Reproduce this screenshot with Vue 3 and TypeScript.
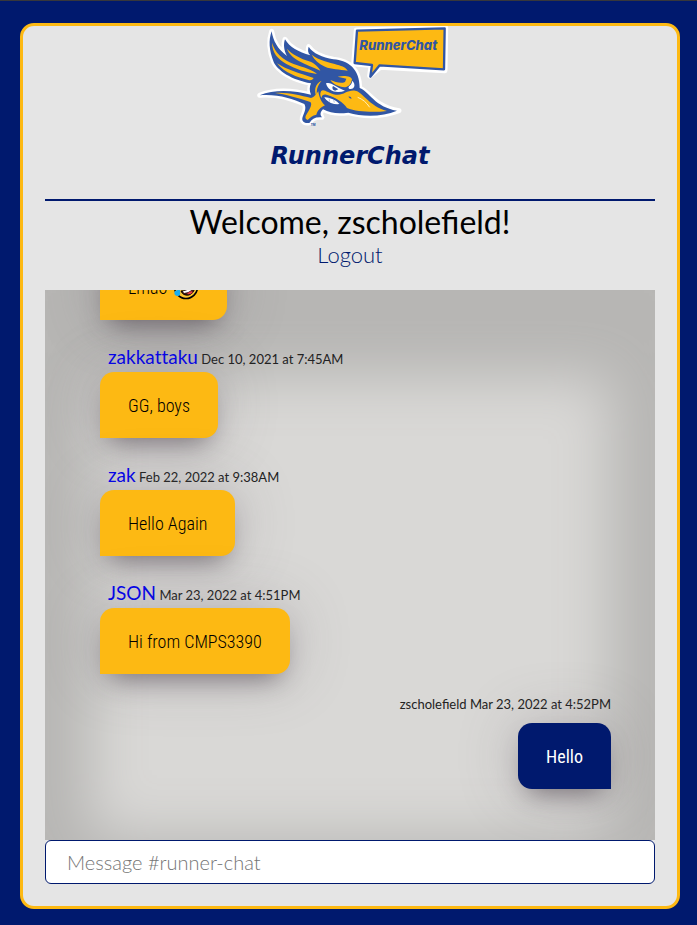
<script setup lang="ts">
import { ref } from 'vue'

interface Message {
  id: number
  author?: string
  time?: string
  text: string
  own?: boolean
  laughing?: boolean
}

const messages = ref<Message[]>([
  { id: 1, text: 'Lmao', laughing: true },
  { id: 2, author: 'zakkattaku', time: 'Dec 10, 2021 at 7:45AM', text: 'GG, boys' },
  { id: 3, author: 'zak', time: 'Feb 22, 2022 at 9:38AM', text: 'Hello Again' },
  { id: 4, author: 'JSON', time: 'Mar 23, 2022 at 4:51PM', text: 'Hi from CMPS3390' },
  { id: 5, author: 'zscholefield', time: 'Mar 23, 2022 at 4:52PM', text: 'Hello', own: true },
])
const draft = ref('')

function send() {
  const text = draft.value.trim()
  if (!text) return
  messages.value.push({ id: Date.now(), author: 'zscholefield', time: 'now', text, own: true })
  draft.value = ''
}
</script>

<template>
  <div class="page">
    <main class="card">
      <header class="brand">
        <svg class="logo" viewBox="15 18 600 306" aria-hidden="true">
          <path class="bird-edge" d="M80 34C84 62 98 88 126 108C116 90 115 72 120 58C134 82 160 96 196 106C188 98 188 90 191 80C204 100 232 112 265 118C310 122 344 146 344 204C372 214 390 262 462 272C410 292 350 290 310 278C280 282 256 280 234 268C226 276 224 284 231 292C212 290 200 296 194 308C182 312 170 306 172 294C176 280 186 266 178 252C140 236 100 222 44 226C90 206 150 212 198 224C192 212 194 200 198 190C140 180 98 152 86 126C72 90 70 62 80 34Z" />
          <path class="bird" d="M80 34C84 62 98 88 126 108C116 90 115 72 120 58C134 82 160 96 196 106C188 98 188 90 191 80C204 100 232 112 265 118C310 122 344 146 344 204C372 214 390 262 456 272C410 292 350 290 310 278C280 282 256 280 234 268C226 276 224 284 231 292C212 290 200 296 194 308C182 312 170 306 172 294C176 280 186 266 178 252C140 236 100 222 44 226C90 206 150 212 198 224C192 212 194 200 198 190C140 180 98 152 86 126C72 90 70 62 80 34Z" />
          <path class="gold" d="M81 68C90 98 112 118 146 132C176 142 204 150 216 162C184 158 152 148 124 132C98 116 82 100 81 68Z" />
          <path class="gold" d="M126 86C142 104 168 116 192 124C210 130 220 142 226 152C204 142 182 134 160 122C144 112 132 102 126 86Z" />
          <path class="gold" d="M200 104C222 122 252 126 276 134C294 138 304 144 308 152C284 148 258 148 240 140C222 132 208 120 200 104Z" />
          <path class="gold" d="M96 130C126 150 164 160 206 174C202 180 198 182 190 180C156 172 118 158 96 130Z" />
          <path class="gold" d="M90 219C126 216 164 226 198 234C208 232 216 220 220 214C222 232 230 248 240 256C224 264 218 272 214 284C202 286 196 292 188 300C182 298 180 294 182 288C192 270 204 254 196 246C160 234 120 222 90 219Z" />
          <path class="gold" d="M230 182C210 190 204 214 218 236C212 212 216 198 230 182Z" />
          <path class="gold" d="M256 180C272 186 286 192 300 186L304 176L278 170C298 166 318 168 321 178C318 192 312 200 300 202C280 200 264 192 256 180Z" />
          <path class="gold" d="M228 214C236 204 248 220 272 224C296 228 304 210 330 212C352 214 372 258 426 273C386 278 336 276 306 264C296 248 270 230 244 224C236 222 230 226 230 234C226 230 224 222 228 214Z" />
          <path class="white" d="M243 190C258 184 272 202 300 212C276 222 248 214 243 190ZM312 206C306 198 320 198 322 182C334 194 328 210 312 206Z" />
          <path class="bird" d="M264 198L280 208L270 212C263 210 260 204 264 198Z" />
          <path class="mouth" d="M234 230C248 226 278 238 288 254C268 258 242 250 234 230Z" />
          <path class="teeth" d="M252 235L254 245M266 240L268 248" />
          <path class="bird" d="M310 230Q318 228 320 236Q314 236 310 230Z" />
          <path class="shine" d="M338 232Q360 240 374 262" />
          <path class="bubble-edge" d="M334 30L602 24L600 152L406 142L374 168L378 136L326 132Z" />
          <path class="bubble" d="M336 32L599 25L597 148L404 136L376 170L381 135L329 129Z" />
          <text class="bubble-text" x="343" y="90">RunnerChat</text>
          <text class="trade" x="197" y="318">TM</text>
        </svg>
        <h1 class="title">RunnerChat</h1>
      </header>

      <section class="welcome">
        <h2 class="greeting">Welcome, zscholefield!</h2>
        <a class="logout" href="#logout">Logout</a>
      </section>

      <section class="chat" aria-label="Messages">
        <article v-for="m in messages" :key="m.id" class="message" :class="{ own: m.own }">
          <p v-if="m.author" class="meta">
            <span v-if="m.own">{{ m.author }}</span>
            <a v-else class="author" href="#profile">{{ m.author }}</a>
            {{ m.time }}
          </p>
          <p class="bubble-box">
            {{ m.text }}
            <svg v-if="m.laughing" class="emoji" viewBox="0 0 26 26" aria-hidden="true">
              <circle cx="13" cy="13" r="11.5" fill="#ffc52e" stroke="#000" stroke-width="1.6" />
              <path d="M8 17Q14 18 20 8Q24 18 16 21Q10 22 8 17Z" fill="#431b17" stroke="#000" />
              <path d="M10 17Q16 17 20 10L21 13Q17 19 11 19Z" fill="#fff" />
              <path d="M14 20Q17 16 20 18Q18 21 14 20Z" fill="#e83b45" />
              <path d="M2 17Q8 14 7 18Q8 22 4 22Q0 21 2 17Z" fill="#17aef0" />
            </svg>
          </p>
        </article>
      </section>

      <form class="composer" @submit.prevent="send">
        <input v-model="draft" class="entry" type="text" aria-label="Message" placeholder="Message #runner-chat" />
      </form>
    </main>
  </div>
</template>

<style>
body {
  background: #00196e;
}
</style>

<style scoped>
* {
  box-sizing: border-box;
}
.page {
  display: flex;
  min-height: 100vh;
  padding: 22px 17px 16px 20px;
  border-top: 1px solid #37373b;
  font-family: Lato, sans-serif;
}
.card {
  display: flex;
  flex: 1;
  flex-direction: column;
  min-width: 0;
  padding: 0 22px 22px;
  border: 3px solid #fdb913;
  border-radius: 14px;
  background: #e5e5e5;
}
.brand {
  display: flex;
  flex-direction: column;
  align-items: center;
  padding-bottom: 27px;
  border-bottom: 2px solid #00196e;
}
.logo {
  width: 200px;
  height: 102px;
}
.bird-edge,
.bubble-edge {
  fill: #fff;
  stroke: #fff;
  stroke-width: 15;
  stroke-linejoin: round;
}
.bird {
  fill: #3156a4;
}
.gold {
  fill: #fdb913;
}
.white {
  fill: #fff;
}
.mouth {
  fill: #fff;
  stroke: #3156a4;
  stroke-width: 5;
}
.teeth {
  fill: none;
  stroke: #3156a4;
  stroke-width: 1;
}
.shine {
  fill: none;
  stroke: #fff0bd;
  stroke-width: 3;
}
.bubble {
  fill: #fdb913;
  stroke: #3156a4;
  stroke-width: 7;
  stroke-linejoin: round;
}
.bubble-text {
  fill: #3156a4;
  font: italic 800 39px Inter, sans-serif;
}
.trade {
  fill: #3156a4;
  font: 700 9px Inter, sans-serif;
}
.title {
  margin: 0;
  padding-top: 12px;
  color: #00196e;
  font: italic 700 24px/32px "DejaVu Sans", sans-serif;
}
.welcome {
  display: flex;
  flex-direction: column;
  align-items: center;
  padding-bottom: 22px;
}
.greeting {
  margin: 0;
  color: #000;
  font-size: 32px;
  font-weight: 400;
  line-height: 41px;
}
.logout {
  color: #00196e;
  font-size: 22px;
  font-weight: 300;
  line-height: 26px;
  text-decoration: none;
}
.chat {
  display: flex;
  flex: 1 1 0;
  flex-direction: column;
  justify-content: flex-end;
  gap: 20px;
  min-height: 240px;
  padding: 0 44px 51px 55px;
  overflow: hidden;
  background: #d9d8d6;
  box-shadow: inset 0 42px 56px 45px #b7b6b4;
}
.message {
  display: flex;
  flex-direction: column;
  align-items: flex-start;
}
.meta {
  height: 32px;
  margin: 0;
  padding: 4px 0 0 8px;
  color: #222;
  font-size: 13px;
  line-height: 26px;
}
.author {
  color: #0000ee;
  font-size: 19px;
  font-variant-ligatures: none;
  text-decoration: none;
}
.bubble-box {
  display: flex;
  align-items: center;
  gap: 6px;
  height: 66px;
  margin: 0;
  padding: 0 28px;
  border-radius: 14px 14px 14px 0;
  background: #fdb913;
  box-shadow: 0 14px 26px -10px rgba(60, 50, 60, 0.55), 0 0 60px rgba(100, 90, 100, 0.3);
  color: #000;
  font-family: "Roboto Condensed", Roboto, sans-serif;
  font-size: 18px;
  font-weight: 300;
}
.emoji {
  width: 26px;
  height: 26px;
}
.own {
  align-items: flex-end;
}
.own .meta {
  height: 29px;
  padding: 0;
  line-height: 20px;
}
.own .bubble-box {
  border-radius: 14px 14px 0 14px;
  background: #00196e;
  color: #fff;
  font-weight: 400;
}
.composer {
  display: flex;
}
.entry {
  width: 100%;
  height: 44px;
  padding: 0 21px;
  border: 1px solid #00196e;
  border-radius: 6px;
  background: #fff;
  font: 300 20px Lato, sans-serif;
}
.entry::placeholder {
  color: #757575;
}
</style>
